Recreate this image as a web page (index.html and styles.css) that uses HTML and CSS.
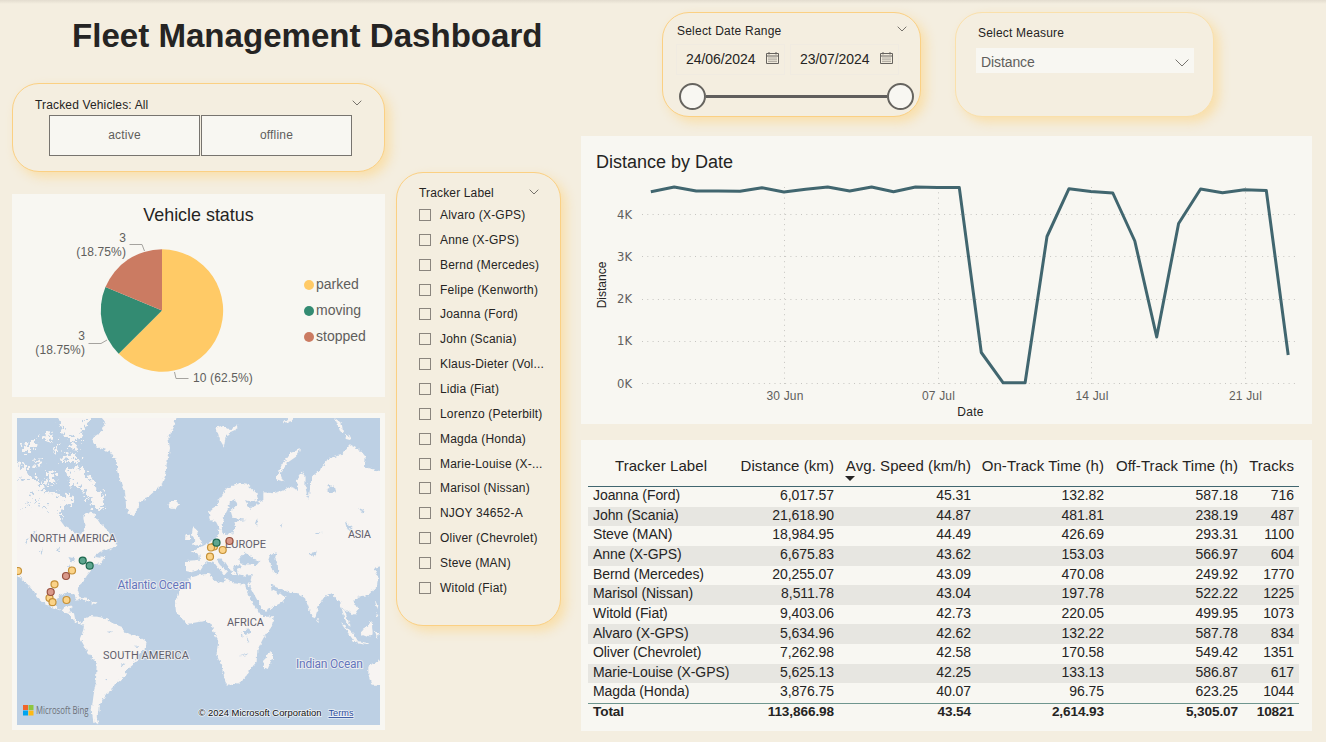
FILE: index.html
```html
<!DOCTYPE html>
<html lang="en">
<head>
<meta charset="utf-8">
<title>Fleet Management Dashboard</title>
<link rel="stylesheet" href="styles.css">
</head>
<body>
<main class="dashboard">
  <section class="side">
    <h1 class="title">Fleet Management Dashboard</h1>
    <div class="side-columns">
      <div class="side-main">
        <div class="slicer vehicles">
          <div class="slicer-head"><span>Tracked Vehicles: All</span><svg class="chev" viewBox="0 0 10 6"><path d="M.7.7 5 5 9.3.7"/></svg></div>
          <div class="tiles"><button class="tile">active</button><button class="tile">offline</button></div>
        </div>
        <div class="panel status">
          <h2 class="status-title">Vehicle status</h2>
          <div class="status-body">
            <svg class="pie" viewBox="13 229 280 160">
              <path fill="#ffca66" d="M162 310.500V249.300A61.200 61.200 0 1 1 118.700 353.800Z"/>
              <path fill="#338b72" d="M162 310.500 118.700 353.800A61.200 61.200 0 0 1 105.460 287.080Z"/>
              <path fill="#cb7b62" d="M162 310.500 105.460 287.080A61.200 61.200 0 0 1 162 249.300Z"/>
              <path class="leader" d="M129.500 244.500H142L144.500 251M88.500 343.500H101L107 340M174.500 372 176 378.500H188.500"/>
              <g class="pie-label">
                <text x="126" y="242" text-anchor="end">3</text>
                <text x="126" y="256" text-anchor="end">(18.75%)</text>
                <text x="85" y="340" text-anchor="end">3</text>
                <text x="85" y="354" text-anchor="end">(18.75%)</text>
                <text x="193" y="382">10 (62.5%)</text>
              </g>
            </svg>
            <ul class="legend">
              <li><i class="dot parked"></i>parked</li>
              <li><i class="dot moving"></i>moving</li>
              <li><i class="dot stopped"></i>stopped</li>
            </ul>
          </div>
        </div>
        <div class="panel map-panel">
          <svg class="map" viewBox="17 418 363 307">
            <defs>
              <filter id="coast" x="0" y="0" width="1" height="1">
                <feTurbulence type="fractalNoise" baseFrequency=".3" numOctaves="2" seed="4"/>
                <feDisplacementMap in="SourceGraphic" scale="4.500" xChannelSelector="R" yChannelSelector="G"/>
              </filter>
              <filter id="arctic" x="0" y="0" width="1" height="1">
                <feTurbulence type="fractalNoise" baseFrequency=".26" numOctaves="3" seed="9"/>
                <feDisplacementMap in="SourceGraphic" scale="17" xChannelSelector="R" yChannelSelector="G"/>
              </filter>
            </defs>
            <rect class="sea" x="17" y="418" width="363" height="307"/>
            <g filter="url(#arctic)"><g transform="translate(0 405) scale(.33333)">
              <g class="land">
              <path d="M170 20H275L250 75 235 110 205 100 185 70Z"/>
              <path d="M65 135 80 115 105 110 112 122 85 142ZM125 95 145 80 160 100 150 115ZM185 155 215 145 242 165 235 172 190 170ZM155 135 175 120 172 145ZM140 195 165 205 172 240 150 235ZM100 165 125 170 120 185 100 180ZM205 115 235 122 240 138 210 132Z"/>
              <path d="M200 190 235 185 262 205 285 240 318 280 305 318 280 305 262 275 240 245 215 240 205 215Z"/>
              <path d="M30 170 75 185 90 210 120 235 140 228 128 262 165 262 190 280 215 265 222 290 185 305 178 340 150 420H30Z"/>
              </g>
              <path class="lake" d="M60 215 72 222 66 232ZM85 262 98 268 90 280ZM105 285 118 290 108 300ZM128 300 140 306 130 316ZM78 290 86 300 76 302ZM95 325 104 330 96 340ZM115 345 124 352 116 360ZM140 335 150 340 144 350Z"/>
            </g></g>
            <g filter="url(#coast)"><g transform="translate(0 405) scale(.33333)">
              <g class="land">
                <path d="M20 330 90 318 180 330 180 345 195 365 220 378 240 390 255 370 250 335 262 322 280 325 300 355 322 375 338 400 352 422 330 432 300 440 282 455 300 458 318 450 302 475 284 478 275 495 262 510 252 525 236 540 232 560 240 580 230 588 222 565 200 563 175 572 165 592 172 610 185 617 198 602 215 602 205 622 222 625 226 645 245 655 258 640 265 640 250 662 225 650 208 628 170 612 135 598 112 575 85 540 51 510 20 480Z"/>
                <path d="M290 20 315 50 305 80 275 100 290 125 330 140 350 170 352 200 365 240 375 260 378 300 385 325 400 333 410 315 418 290 440 280 460 262 485 240 495 210 500 180 510 130 505 100 520 70 530 20Z"/>
                <path d="M502 300 512 288 532 288 537 300 520 312 505 308Z"/>
                <path d="M230 575 258 578 277 592 255 586ZM275 590 292 592 288 600 275 598Z"/>
                <path d="M255 640 270 633 290 635 320 640 335 655 365 665 375 683 415 693 440 710 435 730 415 750 405 775 380 795 375 813 345 840 335 857 320 865 310 880 300 895 298 920 290 935 296 958 280 950 275 915 280 875 288 825 290 775 265 745 240 700 250 675Z"/>
                <path d="M578 366 590 375 595 395 607 412 600 420 575 422 586 405 576 390ZM556 392 570 388 570 408 555 408Z"/>
                <path d="M558 468 600 464 598 448 575 440 600 428 640 405 655 392 653 375 665 372 668 388 700 385 705 365 700 350 740 345 698 338 692 318 712 298 705 282 690 290 685 310 672 335 668 360 660 375 648 350 630 345 625 320 645 308 660 280 680 250 715 235 745 240 770 265 775 285 750 290 735 285 750 312 765 300 790 285 790 262 820 265 845 258 870 245 895 255 890 220 905 200 917 215 916 245 925 285 932 240 935 215 960 195 985 160 1025 150 1050 120 1080 135 1097 155 1095 185 1125 195 1160 200V480L1122 488 1135 515 1130 545 1105 570 1075 575 1060 590 1075 615 1065 630 1045 620 1032 612 1042 640 1052 665 1040 658 1028 620 1020 590 1010 585 995 565 970 580 955 605 945 640 935 635 925 605 915 580 895 565 870 563 825 545 812 537 815 555 835 565 860 575 850 590 820 605 793 620 777 595 758 560 745 538 752 528 755 510 735 512 715 508 710 495 725 488 720 478 705 480 700 495 712 508 700 510 688 490 675 470 660 460 650 465 660 480 682 500 672 512 660 495 640 470 625 468 610 480 600 495 575 502 558 498Z"/>
                <path d="M600 510 570 518 555 540 535 565 525 590 528 620 545 640 560 657 600 650 615 648 635 658 640 680 655 705 650 745 665 785 678 838 700 840 725 830 745 800 770 770 772 735 790 700 815 665 822 633 795 636 778 623 757 590 742 560 735 540 700 535 680 520 665 535 640 525 630 505Z"/>
                <path d="M790 770 800 750 815 738 818 760 803 792 792 787Z"/>
                <path d="M1023 655 1040 665 1062 688 1076 712 1062 708 1045 685ZM1070 708 1108 714 1105 720 1072 715ZM1083 678 1098 668 1115 648 1118 685 1105 697 1088 690ZM1125 680 1138 682 1132 705ZM1125 590 1135 598 1132 612ZM1128 625 1138 630 1132 640ZM950 642 957 645 955 652Z"/>
                <path d="M1160 758 1120 775 1105 785 1105 810 1115 842H1160Z"/>
                <path d="M900 132 870 145 845 180 828 222 850 230 840 205 860 175 888 155ZM645 70 665 62 690 75 715 58 705 78 678 90 672 125 660 105 655 88ZM1005 40 1025 55 1030 85 1020 78ZM1035 88 1052 95 1050 105 1038 102ZM870 35 885 35 875 48 850 55Z"/>
              </g>
              <g class="lake">
                <path d="M718 460 735 443 755 455 778 470 770 480 735 478 720 475ZM810 448 830 442 825 460 833 475 835 505 820 505 812 480 805 462Z"/>
                <path d="M985 240 1005 245 1008 262 990 265 978 255 990 252ZM1078 310 1092 316 1085 328ZM1035 350 1058 365 1050 375 1040 370ZM925 445 950 440 945 455ZM840 360 845 352 845 372ZM765 355 772 340 772 362Z"/>
                <path d="M945 385 970 380 950 389ZM735 675 750 673 750 685 735 690ZM740 690 748 715 742 712ZM715 755 745 745 740 750ZM725 680 728 700 723 690Z"/>
                <path d="M75 405 85 400 78 420ZM205 455 225 460 215 475ZM205 475 212 485 205 490ZM170 430 180 425 175 445ZM120 440 128 430 125 450ZM100 375 110 380 103 390ZM320 680 340 678 330 684ZM405 722 420 720 412 726ZM365 780 373 775 368 784ZM315 822 325 822 320 826Z"/>
              </g>
            </g></g>
            <g class="region">
              <text x="30" y="541.700" textLength="86">NORTH AMERICA</text>
              <text x="225" y="547.700" textLength="41">EUROPE</text>
              <text x="348" y="537.500" textLength="23">ASIA</text>
              <text x="227" y="626" textLength="37">AFRICA</text>
              <text x="103" y="659.300" textLength="86">SOUTH AMERICA</text>
            </g>
            <g class="ocean">
              <text x="117.500" y="588.700" textLength="74">Atlantic Ocean</text>
              <text x="296" y="668.300" textLength="67">Indian Ocean</text>
            </g>
            <g class="pin pin-parked"><circle cx="18" cy="571" r="3.500"/><circle cx="72" cy="570.500" r="3.500"/><circle cx="54.500" cy="584.300" r="3.500"/><circle cx="49.500" cy="598" r="3.500"/><circle cx="52.500" cy="602.200" r="3.500"/><circle cx="66.500" cy="600" r="3.500"/><circle cx="214" cy="546.500" r="3.500"/><circle cx="211" cy="547.500" r="3.500"/><circle cx="222.700" cy="550" r="3.500"/><circle cx="210" cy="556.700" r="3.500"/></g>
            <g class="pin pin-stopped"><circle cx="66" cy="576" r="3.500"/><circle cx="50.700" cy="592" r="3.500"/><circle cx="229.500" cy="541" r="3.500"/></g>
            <g class="pin pin-moving"><circle cx="82.700" cy="560.600" r="3.500"/><circle cx="89.700" cy="565.700" r="3.500"/><circle cx="216.500" cy="542.700" r="3.500"/></g>
            <path fill="#f1652a" d="M23 705h5v5h-5z"/><path fill="#8dc63f" d="M28.500 705h5v5h-5z"/><path fill="#00a4ef" d="M23 710.500h5v5h-5z"/><path fill="#fdb913" d="M28.500 710.500h5v5h-5z"/>
            <text class="bing" x="36" y="714" textLength="52.500" lengthAdjust="spacingAndGlyphs">Microsoft Bing</text>
            <text class="copy" x="198.500" y="716" textLength="123" lengthAdjust="spacingAndGlyphs">© 2024 Microsoft Corporation</text>
            <text class="terms" x="328.500" y="716" textLength="25" lengthAdjust="spacingAndGlyphs">Terms</text>
          </svg>
        </div>
      </div>
      <div class="slicer trackers">
        <div class="slicer-head"><span>Tracker Label</span><svg class="chev" viewBox="0 0 10 6"><path d="M.7.7 5 5 9.3.7"/></svg></div>
        <ul class="tracker-list">
          <li><i class="box"></i>Alvaro (X-GPS)</li>
          <li><i class="box"></i>Anne (X-GPS)</li>
          <li><i class="box"></i>Bernd (Mercedes)</li>
          <li><i class="box"></i>Felipe (Kenworth)</li>
          <li><i class="box"></i>Joanna (Ford)</li>
          <li><i class="box"></i>John (Scania)</li>
          <li><i class="box"></i>Klaus-Dieter (Vol...</li>
          <li><i class="box"></i>Lidia (Fiat)</li>
          <li><i class="box"></i>Lorenzo (Peterbilt)</li>
          <li><i class="box"></i>Magda (Honda)</li>
          <li><i class="box"></i>Marie-Louise (X-...</li>
          <li><i class="box"></i>Marisol (Nissan)</li>
          <li><i class="box"></i>NJOY 34652-A</li>
          <li><i class="box"></i>Oliver (Chevrolet)</li>
          <li><i class="box"></i>Steve (MAN)</li>
          <li><i class="box"></i>Witold (Fiat)</li>
        </ul>
      </div>
    </div>
  </section>

  <section class="content">
    <div class="filters">
      <div class="slicer dates">
        <div class="slicer-head"><span>Select Date Range</span><svg class="chev" viewBox="0 0 10 6"><path d="M.7.7 5 5 9.3.7"/></svg></div>
        <div class="date-row">
          <div class="date">24/06/2024<svg class="cal" viewBox="0 0 13 12"><path d="M.5 1.500h12v10H.5zM.5 4h12M3 0v2.500M10 0v2.500"/><path class="cal-days" d="M2.500 6h8.500M2.500 7.800h8.500M2.500 9.600h8.500"/></svg></div>
          <div class="date">23/07/2024<svg class="cal" viewBox="0 0 13 12"><path d="M.5 1.500h12v10H.5zM.5 4h12M3 0v2.500M10 0v2.500"/><path class="cal-days" d="M2.500 6h8.500M2.500 7.800h8.500M2.500 9.600h8.500"/></svg></div>
        </div>
        <div class="range"><i class="knob"></i><i class="track"></i><i class="knob"></i></div>
      </div>
      <div class="slicer measure">
        <div class="slicer-head"><span>Select Measure</span></div>
        <div class="select">Distance<svg class="select-chev" viewBox="0 0 14 8"><path d="M.6.6 7 7 13.400.6"/></svg></div>
      </div>
    </div>

    <div class="panel chart">
      <h2 class="chart-title">Distance by Date</h2>
      <svg class="line-chart" viewBox="581 176 731 248">
        <path class="grid" d="M642 214.500H1297M642 256.500H1297M642 299.500H1297M642 341.500H1297M642 383.500H1297"/>
        <path class="grid" d="M784.500 187V384M938.500 187V384M1091.500 187V384M1245.500 187V384"/>
        <g class="value-axis">
          <text x="632" y="219">4K</text><text x="632" y="261">3K</text><text x="632" y="303">2K</text><text x="632" y="345">1K</text><text x="632" y="388">0K</text>
        </g>
        <g class="date-axis">
          <text x="785" y="400">30 Jun</text><text x="938.500" y="400">07 Jul</text><text x="1092" y="400">14 Jul</text><text x="1245.500" y="400">21 Jul</text>
        </g>
        <text class="axis-title" x="970.500" y="416">Date</text>
        <text class="axis-title" transform="translate(606 285) rotate(-90)">Distance</text>
        <polyline class="series" points="652.300,191.500 674.200,187 696.200,191 718.100,191 740,191.300 762,187.800 783.900,192 805.800,189.200 827.700,187.100 849.700,191 871.600,187 893.500,191.800 915.500,187 937.400,187.400 959.300,187.600 981.300,352.500 1003.200,382.800 1025.100,382.800 1047,236.500 1069,188.700 1090.900,191.500 1112.800,193 1134.800,241 1156.700,337 1178.600,223.500 1200.600,189 1222.500,192.800 1244.400,189.800 1266.300,190.500 1288,353.500"/>
      </svg>
    </div>

    <div class="panel table-panel">
      <table class="table">
        <colgroup><col class="c-label"><col class="c-dist"><col class="c-speed"><col class="c-on"><col class="c-off"><col class="c-tracks"></colgroup>
        <thead><tr><th class="name">Tracker Label</th><th>Distance (km)</th><th class="sorted">Avg. Speed (km/h)</th><th>On-Track Time (h)</th><th>Off-Track Time (h)</th><th>Tracks</th></tr></thead>
        <tbody>
          <tr><td>Joanna (Ford)</td><td>6,017.57</td><td>45.31</td><td>132.82</td><td>587.18</td><td>716</td></tr>
          <tr><td>John (Scania)</td><td>21,618.90</td><td>44.87</td><td>481.81</td><td>238.19</td><td>487</td></tr>
          <tr><td>Steve (MAN)</td><td>18,984.95</td><td>44.49</td><td>426.69</td><td>293.31</td><td>1100</td></tr>
          <tr><td>Anne (X-GPS)</td><td>6,675.83</td><td>43.62</td><td>153.03</td><td>566.97</td><td>604</td></tr>
          <tr><td>Bernd (Mercedes)</td><td>20,255.07</td><td>43.09</td><td>470.08</td><td>249.92</td><td>1770</td></tr>
          <tr><td>Marisol (Nissan)</td><td>8,511.78</td><td>43.04</td><td>197.78</td><td>522.22</td><td>1225</td></tr>
          <tr><td>Witold (Fiat)</td><td>9,403.06</td><td>42.73</td><td>220.05</td><td>499.95</td><td>1073</td></tr>
          <tr><td>Alvaro (X-GPS)</td><td>5,634.96</td><td>42.62</td><td>132.22</td><td>587.78</td><td>834</td></tr>
          <tr><td>Oliver (Chevrolet)</td><td>7,262.98</td><td>42.58</td><td>170.58</td><td>549.42</td><td>1351</td></tr>
          <tr><td>Marie-Louise (X-GPS)</td><td>5,625.13</td><td>42.25</td><td>133.13</td><td>586.87</td><td>617</td></tr>
          <tr><td>Magda (Honda)</td><td>3,876.75</td><td>40.07</td><td>96.75</td><td>623.25</td><td>1044</td></tr>
        </tbody>
        <tfoot><tr><td>Total</td><td>113,866.98</td><td>43.54</td><td>2,614.93</td><td>5,305.07</td><td>10821</td></tr></tfoot>
      </table>
    </div>
  </section>
</main>
</body>
</html>
```
FILE: styles.css
```css
* { box-sizing: border-box; }

body {
  margin: 0;
  background: #f4eee0;
  color: #252423;
  font-family: "Liberation Sans", Arial, sans-serif;
}

h1, h2, ul { margin: 0; padding: 0; font-weight: normal; }
ul { list-style: none; }

.dashboard {
  display: flex;
  gap: 20px;
  width: 1326px;
  height: 742px;
  overflow: hidden;
  padding-left: 12px;
  background: linear-gradient(#e3dccf, #f4eee0 4px);
}

.side { width: 549px; }

.title {
  height: 83px;
  padding: 17px 0 0 60px;
  font-size: 33.1px;
  line-height: 38px;
  font-weight: bold;
  white-space: nowrap;
}

.side-columns { display: flex; gap: 11px; }
.side-main { width: 373px; }

.panel { background: #f8f7f2; }

.slicer {
  border: 1px solid #fbd083;
  border-radius: 27px;
  background: #f4eee0;
  box-shadow: 5px 5px 11px rgba(255, 206, 110, .48);
  font-size: 12px;
  letter-spacing: .15px;
}

.slicer-head {
  display: flex;
  justify-content: space-between;
  line-height: 14px;
}

.chev { width: 10px; height: 6px; margin-top: 2px; fill: none; stroke: #77736c; }

.vehicles { height: 89px; padding: 14px 22px 0; }
.vehicles .chev { margin-top: 2px; }
.tiles { display: flex; gap: 1px; margin: 3px 0 0 14px; }
.tile {
  width: 151px;
  height: 41px;
  padding: 0 0 2px;
  border: 1px solid #77746f;
  background: #f8f7f2;
  color: #605e5c;
  font: 12px "Liberation Sans", Arial, sans-serif;
  letter-spacing: .2px;
}

.status { height: 203px; margin-top: 22px; padding-top: 11px; }
.status-title { font-size: 17.9px; line-height: 20px; text-align: center; }
.status-body { display: flex; padding-top: 4px; }
.pie { width: 280px; height: 160px; margin-left: 1px; }
.leader { fill: none; stroke: #a5a39f; }
.pie-label { font-size: 12px; letter-spacing: .12px; fill: #605e5c; }
.legend { padding: 42px 0 0 11px; color: #605e5c; font-size: 14px; letter-spacing: 0; }
.legend li { display: flex; align-items: center; gap: 2px; height: 26px; }
.dot { width: 10px; height: 10px; margin-top: 1px; border-radius: 50%; }
.parked { background: #ffca66; }
.moving { background: #338b72; }
.stopped { background: #cb7b62; }

.map-panel { height: 317px; margin-top: 16px; padding: 5px; }
.map { display: block; width: 363px; height: 307px; }
.sea, .lake { fill: #bdd0e4; }
.land { fill: #f7f4f2; }
.region, .ocean { font-family: Roboto, sans-serif; paint-order: stroke; stroke: #f7f4f2; stroke-opacity: .75; stroke-width: 2px; }
.region { font-size: 11px; fill: #62606c; }
.ocean { font-size: 12px; fill: #6576bd; }
.pin circle { stroke-width: 1.2px; }
.pin-parked { fill: #fbd388; stroke: #c59138; }
.pin-stopped { fill: #d9998a; stroke: #98503f; }
.pin-moving { fill: #5ea68f; stroke: #1c684f; }
.bing { font: 10px "Open Sans", sans-serif; fill: #6d7178; }
.copy, .terms { font-size: 9px; fill: #111; paint-order: stroke; stroke: #fff; stroke-opacity: .7; stroke-width: 1.5px; }
.terms { fill: #2f4e9c; text-decoration: underline; }

.trackers { width: 165px; height: 454px; margin-top: 89px; padding: 13px 21px 0 22px; }
.trackers .chev { margin-top: 3px; }
.tracker-list { padding-top: 2.6px; }
.tracker-list li {
  display: flex;
  align-items: center;
  gap: 9px;
  height: 24.87px;
  white-space: nowrap;
  letter-spacing: .2px;
}
.box { width: 12px; height: 12px; border: 1px solid #8a857e; flex: none; }

.content { width: 731px; }
.filters { display: flex; gap: 34px; padding: 12px 0 0 81px; height: 136px; }
.filters .slicer { height: 105px; }

.dates { width: 259px; padding: 11px 13px 0 14px; }
.dates .slicer-head { letter-spacing: .22px; }
.date-row { display: flex; gap: 5px; margin: 6px 0 0 -1px; }
.date {
  display: flex;
  justify-content: space-between;
  width: 109px;
  height: 31px;
  padding: 6px 5px 0 9px;
  border: 1px solid #f0ebe1;
  font-size: 14px;
  line-height: 17px;
  letter-spacing: -.05px;
}
.cal { width: 13px; height: 12px; margin-top: 1px; fill: none; stroke: #66635e; }
.cal-days { stroke-dasharray: 1 1; }
.range { display: flex; align-items: center; margin: 8px -7px 0 2px; }
.knob { width: 27px; height: 27px; border: 2px solid #66645f; border-radius: 50%; background: #f8f7f2; }
.track { flex: 1; height: 3px; background: #605e5c; }

.measure { width: 259px; padding: 13px 19px 0 22px; border-color: #fae0ab; }
.measure .slicer-head { letter-spacing: .2px; }
.select {
  display: flex;
  justify-content: space-between;
  height: 25px;
  margin: 8px 0 0 -2px;
  padding: 5px 5px 0;
  background: #f8f7f2;
  color: #605e5c;
  font-size: 14px;
  line-height: 18px;
  letter-spacing: -.1px;
}
.select-chev { width: 14px; height: 8px; margin-top: 6px; fill: none; stroke: #77746f; }

.chart { height: 288px; }
.chart-title { height: 40px; padding: 16px 0 0 15px; font-size: 18px; line-height: 20px; }
.line-chart { display: block; width: 731px; height: 248px; font-size: 12px; }
.grid { stroke: #c6c5c1; stroke-dasharray: 1 4.300; fill: none; }
.value-axis { font: 11.6px "DejaVu Sans", sans-serif; fill: #605e5c; text-anchor: end; }
.date-axis { fill: #605e5c; text-anchor: middle; letter-spacing: .15px; }
.axis-title { fill: #252423; text-anchor: middle; letter-spacing: .25px; }
.axis-title:not([x]) { letter-spacing: 0; }
.series { fill: none; stroke: #41666f; stroke-width: 3; stroke-linejoin: round; stroke-linecap: square; }

.table-panel { height: 291px; margin-top: 16px; padding: 9px 0 0 7px; }
.table { width: 711px; table-layout: fixed; border-collapse: separate; border-spacing: 0; font-size: 14px; letter-spacing: -.07px; }
.c-label { width: 146px; }
.c-dist { width: 105px; }
.c-speed { width: 137px; }
.c-on { width: 133px; }
.c-off { width: 134px; }
.c-tracks { width: 56px; }
.table th {
  position: relative;
  height: 38px;
  padding: 8px 5px 0 0;
  border-bottom: 1px solid #41666f;
  font-size: 15px;
  font-weight: normal;
  line-height: 18px;
  letter-spacing: .07px;
  text-align: right;
  vertical-align: top;
  white-space: nowrap;
}
.table th.name { padding-left: 0; padding-right: 0; text-align: center; }
.sorted::after {
  content: "";
  position: absolute;
  left: 6px;
  bottom: 5px;
  border: 5px solid transparent;
  border-top-color: #252423;
  border-bottom: 0;
}
.table td { height: 19.65px; padding: 0 5px 2.6px 0; line-height: 17px; text-align: right; }
.table td:first-child { padding-left: 5px; text-align: left; white-space: nowrap; }
.table tbody tr:nth-child(even) { background: #e7e6e1; }
.table tfoot td { border-top: 1px solid #6f968f; font-size: 13.6px; font-weight: bold; letter-spacing: -.1px; line-height: 16px; }
```
